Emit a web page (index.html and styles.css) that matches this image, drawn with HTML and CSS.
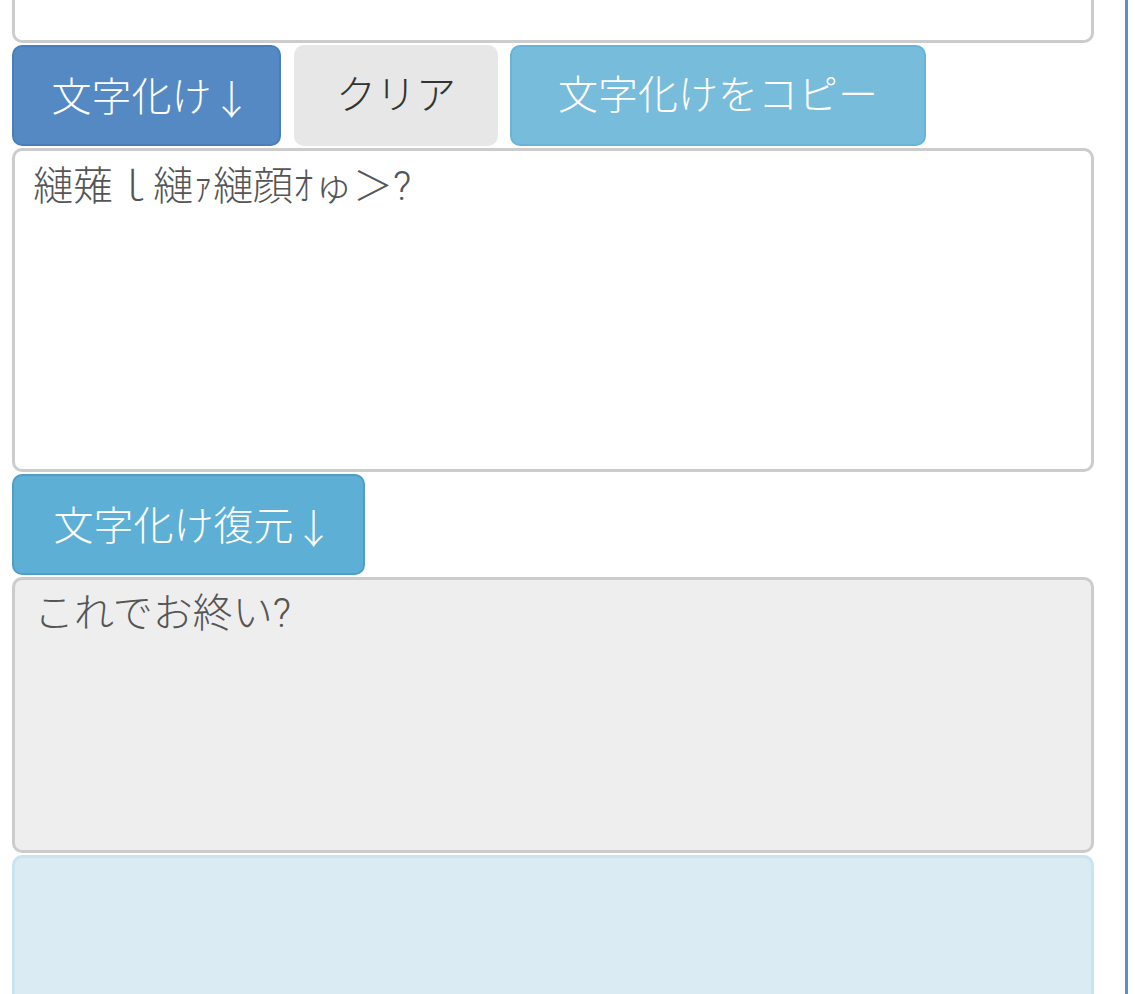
FILE: index.html
```html
<!DOCTYPE html>
<html lang="ja">
<head>
<meta charset="utf-8">
<title>文字化け</title>
<link rel="stylesheet" href="styles.css">
</head>
<body>
<div class="page">
  <div class="content">
    <textarea class="box box-top" readonly></textarea>
    <div class="btn-row">
      <button class="btn btn-primary">文字化け<span class="arrow">↓</span></button>
      <button class="btn btn-default">クリア</button>
      <button class="btn btn-info-light">文字化けをコピー</button>
    </div>
    <textarea class="box box-mojibake" readonly>縺薙ｌ縺ｧ縺顔ｵゅ＞?</textarea>
    <div class="btn-row">
      <button class="btn btn-info">文字化け復元<span class="arrow">↓</span></button>
    </div>
    <textarea class="box box-restored" readonly>これでお終い?</textarea>
    <div class="box box-alert"></div>
  </div>
</div>
</body>
</html>
```

FILE: styles.css
```css
html, body {
  margin: 0;
  padding: 0;
  background: #ffffff;
  overflow: hidden;
}

body {
  font-family: Roboto, "Noto Sans CJK JP", sans-serif;
}

.page {
  width: 1125px;
  min-height: 994px;
  border-right: 3px solid #5b8dd0;
  box-sizing: content-box;
}

.content {
  width: 1082px;
  padding-left: 12px;
  display: flex;
  flex-direction: column;
  gap: 2px;
}

.box {
  display: block;
  width: 100%;
  box-sizing: border-box;
  border: 3px solid #cccccc;
  border-radius: 10px;
  background: #ffffff;
  font-family: Roboto, "Noto Sans CJK JP", sans-serif;
  font-weight: 300;
  font-size: 40px;
  line-height: 52px;
  color: #555555;
  resize: none;
  outline: none;
  margin: 0;
  overflow: hidden;
}

.box-top {
  height: 43px;
  border-top: none;
  border-radius: 0 0 10px 10px;
}

.box-mojibake {
  height: 324px;
  padding: 10px 18px;
}

.box-restored {
  height: 276px;
  padding: 8px 19px;
  background: #eeeeee;
}

.box-alert {
  height: 160px;
  background: #dbebf3;
  border-color: #c6e5ef;
}

.btn-row {
  display: flex;
  gap: 12px;
}

.btn {
  height: 101px;
  box-sizing: border-box;
  border: 2px solid transparent;
  border-radius: 10px;
  padding: 0;
  font-family: Roboto, "Noto Sans CJK JP", sans-serif;
  font-weight: 300;
  font-size: 40px;
  line-height: 1;
  white-space: nowrap;
  text-align: center;
  cursor: pointer;
  margin: 0;
}

.arrow {
  font-family: "Noto Sans CJK JP", sans-serif;
  font-weight: 300;
  margin: 0 -10px 0 0;
  position: relative;
  top: 3px;
}

.btn-primary {
  width: 269px;
  background: #5589c4;
  border-color: #4a7ebb;
  color: #ffffff;
}

.btn-default {
  width: 204px;
  margin-left: 1px;
  background: #e7e7e7;
  border-color: #e7e7e7;
  color: #333333;
}

.btn-info-light {
  width: 416px;
  background: #77bcdb;
  border-color: #68b3d7;
  color: #ffffff;
}

.btn-info {
  width: 353px;
  background: #5eafd5;
  border-color: #4f9ec4;
  color: #ffffff;
}
```
